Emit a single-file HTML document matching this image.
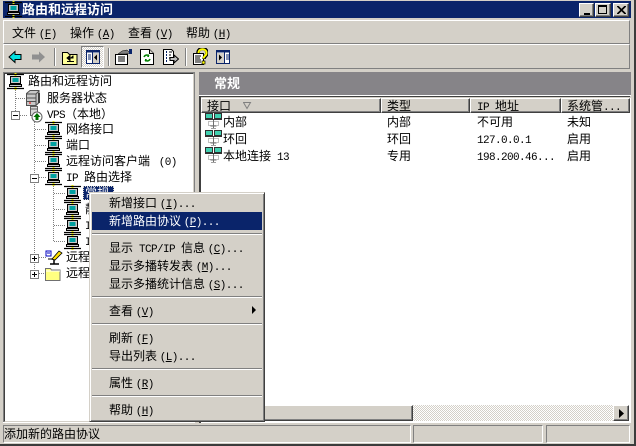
<!DOCTYPE html>
<html><head><meta charset="utf-8"><style>
html,body{margin:0;padding:0}
body{width:636px;height:446px;overflow:hidden;position:relative;background:#d4d0c8;font:12px/14px "WenQuanYi Zen Hei","Noto Sans CJK SC",sans-serif;color:#000}
div,svg,span.t{position:absolute}
span.t{white-space:pre;height:14px;line-height:14px}
i{font:normal 11px/14px "Liberation Mono",monospace;letter-spacing:-.6px}
.w{color:#fff}
.up{box-sizing:border-box;background:#d4d0c8;border:1px solid;border-color:#fff #404040 #404040 #fff;box-shadow:inset -1px -1px 0 #808080}
.h{position:absolute;top:98px;height:15px;box-sizing:border-box;background:#d4d0c8;border:1px solid;border-color:#fff #404040 #404040 #fff;box-shadow:inset -1px -1px 0 #808080}
.sep{left:92px;width:170px;height:1px;background:#808080;border-bottom:1px solid #fff}
.tb{width:1px;height:18px;top:48px;background:#808080;border-right:1px solid #fff}
.dv{width:1px;background-image:linear-gradient(#808080 50%,transparent 50%);background-size:1px 2px}
.dh{height:1px;background-image:linear-gradient(90deg,#808080 50%,transparent 50%);background-size:2px 1px}
.bx{width:9px;height:9px;box-sizing:border-box;border:1px solid #808080;background:#fff}
.bx:before{content:"";position:absolute;left:1px;top:3px;width:5px;height:1px;background:#000}
.bx.p:after{content:"";position:absolute;left:3px;top:1px;width:1px;height:5px;background:#000}
.ss{top:425px;height:18px;box-sizing:border-box;border:1px solid;border-color:#808080 #fff #fff #808080}
</style></head><body>
<svg width="0" height="0" style="left:0;top:0"><defs>
<symbol id="pc" viewBox="0 0 17 17"><path d="M8.500 0v17" stroke="#ff0" stroke-width="2"/><path d="M0 1.500h17M0 15.500h17" stroke="#000" stroke-width="1.300"/><rect x="3.500" y="3.500" width="10" height="7" fill="#c8c8c8" stroke="#000"/><rect x="5.500" y="5" width="6" height="4" fill="#00a0a0"/><rect x="2.500" y="11.500" width="12" height="2" fill="#c8c8c8" stroke="#000"/></symbol>
<symbol id="ni" viewBox="0 0 18 17"><rect x="0.500" y="0.500" width="7" height="5" fill="#40d0b0" stroke="#303030"/><rect x="9.500" y="0.500" width="7" height="5" fill="#40d0b0" stroke="#303030"/><path d="M0 6.500h17" stroke="#303030"/><path d="M3.500 8.500h10v4h-10z" fill="#fff" stroke="#808080" stroke-dasharray="1 1"/><path d="M8.500 7v9M5.500 13h6" stroke="#707070"/><path d="M6 15.500h5" stroke="#a0a0a0"/></symbol>
</defs></svg>

<div style="left:0;top:0;width:636px;height:446px;box-sizing:border-box;border-right:2px solid #404040;border-bottom:2px solid #404040;border-left:2px solid #d4d0c8;border-top:1px solid #d4d0c8"></div>
<div style="left:634px;top:0;width:2px;height:446px;background:#3c3c3c"></div>
<div style="left:0;top:444px;width:636px;height:2px;background:#3c3c3c"></div>

<!-- title -->
<div style="left:3px;top:1px;width:628px;height:17px;background:#0a246a"></div>
<svg style="left:5px;top:1px" width="17" height="17"><use href="#pc"/></svg>
<span class="t w" style="left:22px;top:2px;font-weight:bold;font-size:13px">路由和远程访问</span>
<div class="up" style="left:579px;top:3px;width:15px;height:14px"><div style="left:4px;top:9px;width:6px;height:2px;background:#000"></div></div>
<div class="up" style="left:595px;top:3px;width:16px;height:14px"><div style="left:2px;top:1px;width:9px;height:9px;box-sizing:border-box;border:1px solid #000;border-top-width:2px"></div></div>
<div class="up" style="left:613px;top:3px;width:16px;height:14px"><svg style="left:3px;top:2px" width="9" height="8"><path d="M0 0l8 8M1 0l8 8M8 0l-8 8M9 0l-8 8" stroke="#000"/></svg></div>

<!-- menu bar -->
<div style="left:3px;top:20px;width:627px;height:24px;box-sizing:border-box;border:1px solid;border-color:#fff #808080 #808080 #fff"></div>
<div style="left:3px;top:44px;width:627px;height:25px;box-sizing:border-box;border:1px solid;border-color:#fff #808080 #808080 #fff"></div>
<span class="t" style="left:12px;top:26px">文件 <i>(<u>F</u>)</i></span>
<span class="t" style="left:70px;top:26px">操作 <i>(<u>A</u>)</i></span>
<span class="t" style="left:128px;top:26px">查看 <i>(<u>V</u>)</i></span>
<span class="t" style="left:186px;top:26px">帮助 <i>(<u>H</u>)</i></span>

<!-- toolbar -->
<svg style="left:8px;top:50px" width="14" height="14"><path d="M1 7l6-5.500v3h6v5H7v3z" fill="#00e0e0" stroke="#000" stroke-width="1"/></svg>
<svg style="left:31px;top:50px" width="15" height="14"><path d="M14 7L8 1.500v3H1v5h7v3z" fill="#909090"/></svg>
<div class="tb" style="left:54px"></div>
<svg style="left:62px;top:49px" width="16" height="16"><path d="M.5 3.500h5l2 2h7.500v10H.5z" fill="#ffff99" stroke="#000"/><path d="M8 6.500l-3 2.500 3 2.500zM8 9h3V6.500M5 12.500h7" fill="#000" stroke="#000"/></svg>
<div style="left:81px;top:46px;width:23px;height:22px;box-sizing:border-box;border:1px solid;border-color:#808080 #fff #fff #808080;background:repeating-conic-gradient(#fff 0 25%,#d4d0c8 0 50%) 0 0/2px 2px"></div>
<svg style="left:86px;top:50px" width="14" height="14"><rect x=".5" y=".5" width="13" height="13" fill="#fff" stroke="#0a246a"/><rect x=".5" y=".5" width="13" height="2" fill="#0a246a"/><path d="M6.500 1v12" stroke="#0a246a"/><path d="M2 5h3M2 7h3M2 9h3" stroke="#0a246a"/><rect x="7" y="3" width="6" height="10" fill="#d4d0c8"/><path d="M11 4.500v6L8 7.500z" fill="#000"/></svg>
<div class="tb" style="left:108px"></div>
<svg style="left:115px;top:49px" width="17" height="16"><path d="M.5 5.500h12v10H.5z" fill="#fff" stroke="#000"/><path d="M3 8h7M3 10h7M3 12h7" stroke="#000"/><path d="M3 5l4-3 5-1 3 3-4 1z" fill="#808080" stroke="#000" stroke-width=".5"/><rect x="14" y="0" width="3" height="5" fill="#0a246a"/></svg>
<svg style="left:140px;top:49px" width="14" height="16"><path d="M.5.500h9l4 4v11H.5z" fill="#fff" stroke="#000"/><path d="M9.500.500v4h4" fill="#d4d0c8" stroke="#000"/><path d="M4 8a3 3 0 0 1 5-1M10 10a3 3 0 0 1-5 1" fill="none" stroke="#008000" stroke-width="1.500"/><path d="M9 5v3H7zM5 13v-3h2z" fill="#008000"/></svg>
<svg style="left:163px;top:49px" width="16" height="16"><path d="M.5.500h8l2 2v13H.5z" fill="#fff" stroke="#000"/><path d="M3 3h1M3 6h1M3 9h1M3 12h1" stroke="#0a246a" stroke-width="2"/><path d="M6 3h3M6 6h2M6 9h2" stroke="#000"/><path d="M7 8.500h4V6l4.500 4-4.500 4v-2.500H7z" fill="#c0c0c0" stroke="#000"/></svg>
<div class="tb" style="left:185px"></div>
<svg style="left:193px;top:48px" width="15" height="18"><path d="M.5 5.500h10v11H.5z" fill="#fff" stroke="#000"/><path d="M2 8h6M2 10h5M2 12h6M2 14h6" stroke="#000"/><path d="M5 5c0-6 9-6 9 0 0 3-3 3-3 6" fill="none" stroke="#000" stroke-width="3.500"/><path d="M5.500 5c0-5 8-5 8 0 0 3-3 3-3 5.500" fill="none" stroke="#ff0" stroke-width="2"/><rect x="9" y="13" width="3" height="3" fill="#ff0" stroke="#000" stroke-width=".7"/></svg>
<svg style="left:216px;top:50px" width="14" height="14"><rect x=".5" y=".5" width="13" height="13" fill="#fff" stroke="#0a246a"/><rect x=".5" y=".5" width="13" height="2" fill="#0a246a"/><path d="M8.500 1v12" stroke="#0a246a"/><path d="M10 5h3M10 7h3M10 9h3" stroke="#0a246a"/><rect x="1" y="3" width="7" height="10" fill="#d4d0c8"/><path d="M3 4.500v6l3-3z" fill="#000"/></svg>

<!-- tree pane -->
<div style="left:3px;top:72px;width:192px;height:351px;box-sizing:border-box;background:#fff;border:2px solid;border-color:#404040 #d4d0c8 #d4d0c8 #404040;outline:0"></div>
<div style="left:3px;top:72px;width:192px;height:1px;background:#808080"></div>
<div style="left:3px;top:72px;width:1px;height:351px;background:#808080"></div>
<div style="left:194px;top:72px;width:1px;height:351px;background:#808080"></div>
<div style="left:3px;top:422px;width:192px;height:1px;background:#fff"></div>

<div class="dv" style="left:15px;top:88px;height:30px"></div>
<div class="dv" style="left:34px;top:122px;height:58px"></div>
<div class="dv" style="left:53px;top:184px;height:58px"></div>
<div class="dv" style="left:34px;top:180px;height:94px"></div>
<div class="dh" style="left:16px;top:98px;width:11px"></div>
<div class="dh" style="left:20px;top:115px;width:8px"></div>
<div class="dh" style="left:35px;top:129px;width:11px"></div>
<div class="dh" style="left:35px;top:145px;width:11px"></div>
<div class="dh" style="left:35px;top:161px;width:11px"></div>
<div class="dh" style="left:39px;top:177px;width:7px"></div>
<div class="dh" style="left:54px;top:193px;width:11px"></div>
<div class="dh" style="left:54px;top:209px;width:11px"></div>
<div class="dh" style="left:54px;top:225px;width:11px"></div>
<div class="dh" style="left:54px;top:241px;width:11px"></div>
<div class="dh" style="left:39px;top:257px;width:7px"></div>
<div class="dh" style="left:39px;top:273px;width:7px"></div>

<div class="bx" style="left:11px;top:111px"></div>
<div class="bx" style="left:30px;top:174px"></div>
<div class="bx p" style="left:30px;top:254px"></div>
<div class="bx p" style="left:30px;top:270px"></div>

<svg style="left:7px;top:73px" width="17" height="17"><use href="#pc"/></svg>
<svg style="left:26px;top:90px" width="17" height="16"><path d="M.5 3.500L4 .5h9v12l-3 3H.5z" fill="#c8c8c8" stroke="#505050"/><path d="M1 4h9v11M1 8h9M1 11.500h9M13 1l-3 3" fill="none" stroke="#505050"/><rect x="3" y="12.500" width="2" height="1" fill="#e00"/><rect x="12" y="3" width="2" height="10" fill="#404040"/></svg>
<svg style="left:28px;top:106px" width="15" height="17"><path d="M2.500.5h7v9h-7z" fill="#d8d8d8" stroke="#606060"/><path d="M3 3h6" stroke="#606060"/><circle cx="9" cy="11" r="5" fill="#fff" stroke="#606060"/><path d="M9 7l3.500 4H10.500v3h-3v-3H5.500z" fill="#007000"/></svg>
<svg style="left:45px;top:121px" width="17" height="17"><use href="#pc"/></svg>
<svg style="left:45px;top:137px" width="17" height="17"><use href="#pc"/></svg>
<svg style="left:45px;top:153px" width="17" height="17"><use href="#pc"/></svg>
<svg style="left:45px;top:169px" width="17" height="17"><use href="#pc"/></svg>
<svg style="left:64px;top:185px" width="17" height="17"><use href="#pc"/></svg>
<svg style="left:64px;top:201px" width="17" height="17"><use href="#pc"/></svg>
<svg style="left:64px;top:217px" width="17" height="17"><use href="#pc"/></svg>
<svg style="left:64px;top:233px" width="17" height="17"><use href="#pc"/></svg>
<svg style="left:45px;top:249px" width="18" height="17"><path d="M1 2h5v5H1z" fill="#fff" stroke="#0000c0"/><path d="M2 4h3" stroke="#0000c0"/><path d="M3 9h6v2H3z" fill="#808080"/><path d="M7 10l7-8 3 2-7 7z" fill="#ffe000" stroke="#000" stroke-width=".8"/><path d="M5 15h9M9 11v4" stroke="#000" stroke-width="1.500"/></svg>
<svg style="left:45px;top:266px" width="16" height="15"><path d="M.5 2.500h5l1 1.500h8.500v10.500H.5z" fill="#ffff80" stroke="#707070"/><path d="M1 5h14" stroke="#fff"/></svg>

<span class="t" style="left:28px;top:74px">路由和远程访问</span>
<span class="t" style="left:47px;top:91px">服务器状态</span>
<span class="t" style="left:47px;top:107px"><i>VPS</i>（本地）</span>
<span class="t" style="left:66px;top:122px">网络接口</span>
<span class="t" style="left:66px;top:138px">端口</span>
<span class="t" style="left:66px;top:154px">远程访问客户端 <i> (0)</i></span>
<span class="t" style="left:66px;top:170px"><i>IP </i>路由选择</span>
<div style="left:83px;top:186px;width:31px;height:14px;background:#0a246a;box-sizing:border-box;border:1px dotted #d4d0c8"></div>
<span class="t w" style="left:85px;top:186px">常规</span>
<span class="t" style="left:85px;top:202px">静态路由</span>
<span class="t" style="left:85px;top:218px"><i>IGMP</i></span>
<span class="t" style="left:85px;top:234px"><i>IP</i></span>
<span class="t" style="left:66px;top:250px">远程访问策略</span>
<span class="t" style="left:66px;top:266px">远程访问记录</span>

<!-- right pane -->
<div style="left:199px;top:72px;width:432px;height:351px;background:#fff"></div>
<div style="left:199px;top:72px;width:432px;height:23px;background:#868488"></div>
<div style="left:199px;top:95px;width:432px;height:1px;background:#fff"></div>
<div style="left:199px;top:96px;width:432px;height:2px;background:#d4d0c8"></div>
<div style="left:199px;top:96px;width:2px;height:327px;background:#404040"></div>
<div style="left:201px;top:96px;width:429px;height:1px;background:#404040"></div>
<span class="t w" style="left:214px;top:76px;font-weight:bold;font-size:13px">常规</span>
<div class="h" style="left:201px;width:180px"></div>
<div class="h" style="left:381px;width:89px"></div>
<div class="h" style="left:470px;width:91px"></div>
<div class="h" style="left:561px;width:69px"></div>
<span class="t" style="left:207px;top:99px">接口</span>
<svg style="left:243px;top:101px" width="9" height="9"><path d="M.5 1.500h7l-3.500 6z" fill="none" stroke="#808080"/></svg>
<span class="t" style="left:387px;top:99px">类型</span>
<span class="t" style="left:477px;top:99px"><i>IP </i>地址</span>
<span class="t" style="left:567px;top:99px">系统管<i>...</i></span>

<svg style="left:205px;top:113px" width="18" height="17"><use href="#ni"/></svg>
<svg style="left:205px;top:130px" width="18" height="17"><use href="#ni"/></svg>
<svg style="left:205px;top:147px" width="18" height="17"><use href="#ni"/></svg>
<span class="t" style="left:223px;top:115px">内部</span>
<span class="t" style="left:387px;top:115px">内部</span>
<span class="t" style="left:477px;top:115px">不可用</span>
<span class="t" style="left:567px;top:115px">未知</span>
<span class="t" style="left:223px;top:132px">环回</span>
<span class="t" style="left:387px;top:132px">环回</span>
<span class="t" style="left:477px;top:132px"><i>127.0.0.1</i></span>
<span class="t" style="left:567px;top:132px">启用</span>
<span class="t" style="left:223px;top:149px">本地连接<i> 13</i></span>
<span class="t" style="left:387px;top:149px">专用</span>
<span class="t" style="left:477px;top:149px"><i>198.200.46...</i></span>
<span class="t" style="left:567px;top:149px">启用</span>

<!-- scrollbar -->
<div style="left:413px;top:405px;width:200px;height:16px;background:repeating-conic-gradient(#fff 0 25%,#d4d0c8 0 50%) 0 0/2px 2px"></div>
<div class="up" style="left:201px;top:405px;width:212px;height:16px"></div>
<div class="up" style="left:613px;top:405px;width:16px;height:16px"><svg style="left:5px;top:3px" width="6" height="9"><path d="M0 0l5 4.500L0 9z" fill="#000"/></svg></div>

<!-- status -->
<div class="ss" style="left:3px;width:408px"></div>
<div class="ss" style="left:413px;width:130px"></div>
<div class="ss" style="left:546px;width:84px"></div>
<span class="t" style="left:4px;top:427px">添加新的路由协议</span>

<!-- context menu -->
<div style="left:89px;top:192px;width:176px;height:230px;box-sizing:border-box;background:#d4d0c8;border:1px solid;border-color:#d4d0c8 #404040 #404040 #d4d0c8;box-shadow:inset 1px 1px 0 #fff,inset -1px -1px 0 #808080"></div>
<div style="left:92px;top:212px;width:170px;height:18px;background:#0a246a"></div>
<span class="t" style="left:109px;top:196px">新增接口 <i>(<u>I</u>)...</i></span>
<span class="t w" style="left:109px;top:214px">新增路由协议 <i>(<u>P</u>)...</i></span>
<div class="sep" style="top:233px"></div>
<span class="t" style="left:109px;top:241px">显示<i> TCP/IP </i>信息 <i>(<u>C</u>)...</i></span>
<span class="t" style="left:109px;top:259px">显示多播转发表 <i>(<u>M</u>)...</i></span>
<span class="t" style="left:109px;top:277px">显示多播统计信息 <i>(<u>S</u>)...</i></span>
<div class="sep" style="top:296px"></div>
<span class="t" style="left:109px;top:304px">查看 <i>(<u>V</u>)</i></span>
<svg style="left:252px;top:306px" width="5" height="8"><path d="M0 0l4 4-4 4z" fill="#000"/></svg>
<div class="sep" style="top:323px"></div>
<span class="t" style="left:109px;top:331px">刷新 <i>(<u>F</u>)</i></span>
<span class="t" style="left:109px;top:349px">导出列表 <i>(<u>L</u>)...</i></span>
<div class="sep" style="top:368px"></div>
<span class="t" style="left:109px;top:376px">属性 <i>(<u>R</u>)</i></span>
<div class="sep" style="top:395px"></div>
<span class="t" style="left:109px;top:403px">帮助 <i>(<u>H</u>)</i></span>
</body></html>
